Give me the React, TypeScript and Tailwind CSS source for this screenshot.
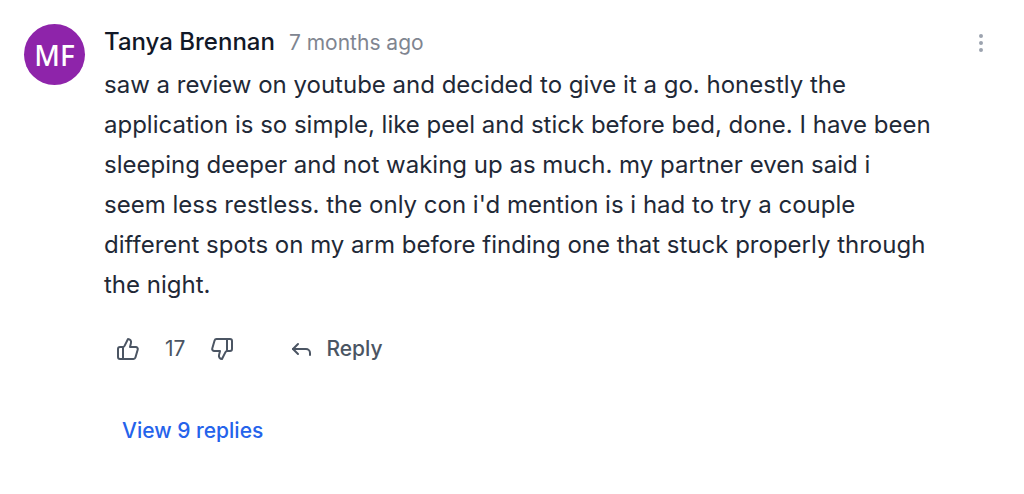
import { EllipsisVertical, ThumbsDown, ThumbsUp } from "lucide-react";

const comment = {
  initials: "MF",
  author: "Tanya Brennan",
  postedAt: "7 months ago",
  likes: 17,
  replies: 9,
  body: "saw a review on youtube and decided to give it a go. honestly the application is so simple, like peel and stick before bed, done. I have been sleeping deeper and not waking up as much. my partner even said i seem less restless. the only con i'd mention is i had to try a couple different spots on my arm before finding one that stuck properly through the night.",
};

function ReplyIcon() {
  return (
    <svg
      width="24"
      height="24"
      viewBox="0 0 24 24"
      fill="none"
      stroke="currentColor"
      strokeWidth="2"
      strokeLinecap="round"
      strokeLinejoin="round"
      aria-hidden="true"
    >
      <path d="M8 7 3 12l5 5" />
      <path d="M3 12h13a4 4 0 0 1 4 4v2" />
    </svg>
  );
}

export default function App() {
  return (
    <main className="min-h-screen bg-white p-6 font-['Inter',sans-serif]">
      <article className="flex items-start gap-[19px]">
        <div className="flex size-[61px] shrink-0 items-center justify-center rounded-full bg-[#8e24aa] font-['Noto_Sans',sans-serif] text-[28px] font-medium text-white">
          {comment.initials}
        </div>
        <div className="min-w-0 flex-1">
          <header className="flex items-center justify-between">
            <div className="flex items-baseline gap-3.5">
              <h2 className="text-2xl leading-9 font-medium text-[#111827]">
                {comment.author}
              </h2>
              <span className="text-[21px] leading-9 text-[#808590]">
                {comment.postedAt}
              </span>
            </div>
            <button type="button" aria-label="More options" className="mr-[7px] text-[#9ca3af]">
              <EllipsisVertical size={24} />
            </button>
          </header>
          <p className="mt-1 pr-16 text-2xl leading-10 text-[#1f2937]">
            {comment.body}
          </p>
          <div className="mt-7 flex items-center pl-3 text-[21px] leading-8 text-[#4b5563]">
            <button type="button" aria-label="Like">
              <ThumbsUp size={24} strokeWidth={2} />
            </button>
            <span className="ml-[25px]">{comment.likes}</span>
            <button type="button" aria-label="Dislike" className="ml-[25px]">
              <ThumbsDown size={24} strokeWidth={2} />
            </button>
            <button type="button" className="ml-14 flex items-center gap-3 font-medium">
              <ReplyIcon />
              Reply
            </button>
          </div>
          <button
            type="button"
            className="mt-[50px] ml-[18px] text-[21px] leading-8 font-medium text-[#2563eb]"
          >
            View {comment.replies} replies
          </button>
        </div>
      </article>
    </main>
  );
}
